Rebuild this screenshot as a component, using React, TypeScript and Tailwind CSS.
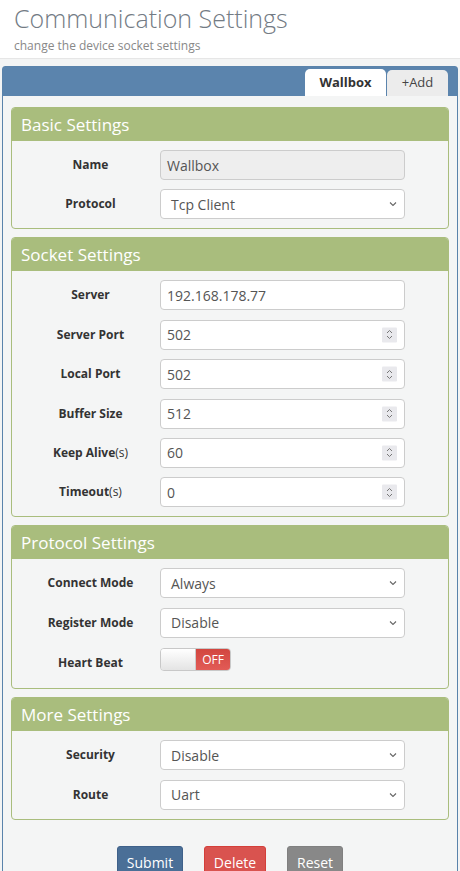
import React from "react";

type Row = {
  label: string;
  unit?: string;
  kind: "text" | "disabled" | "select" | "number" | "toggle";
  value?: string;
};

type Section = { title: string; rows: Row[] };

const sections: Section[] = [
  {
    title: "Basic Settings",
    rows: [
      { label: "Name", kind: "disabled", value: "Wallbox" },
      { label: "Protocol", kind: "select", value: "Tcp Client" },
    ],
  },
  {
    title: "Socket Settings",
    rows: [
      { label: "Server", kind: "text", value: "192.168.178.77" },
      { label: "Server Port", kind: "number", value: "502" },
      { label: "Local Port", kind: "number", value: "502" },
      { label: "Buffer Size", kind: "number", value: "512" },
      { label: "Keep Alive", unit: "(s)", kind: "number", value: "60" },
      { label: "Timeout", unit: "(s)", kind: "number", value: "0" },
    ],
  },
  {
    title: "Protocol Settings",
    rows: [
      { label: "Connect Mode", kind: "select", value: "Always" },
      { label: "Register Mode", kind: "select", value: "Disable" },
      { label: "Heart Beat", kind: "toggle" },
    ],
  },
  {
    title: "More Settings",
    rows: [
      { label: "Security", kind: "select", value: "Disable" },
      { label: "Route", kind: "select", value: "Uart" },
    ],
  },
];

const Chevron = () => (
  <svg width="8" height="5" viewBox="0 0 8 5" className="absolute right-[7px] top-1/2 -translate-y-1/2">
    <path d="M1 1l3 3 3-3" fill="none" stroke="#666" strokeWidth="1.1" />
  </svg>
);

const Spinner = () => (
  <span className="absolute right-[7px] top-1/2 -translate-y-1/2 w-[15px] h-[15px] bg-[#e9e9ed] flex flex-col items-center justify-center gap-[2px] rounded-[1px]">
    <svg width="7" height="4" viewBox="0 0 7 4">
      <path d="M1 3.5L3.5 1 6 3.5" fill="none" stroke="#777" strokeWidth="1" />
    </svg>
    <svg width="7" height="4" viewBox="0 0 7 4">
      <path d="M1 0.5L3.5 3 6 0.5" fill="none" stroke="#777" strokeWidth="1" />
    </svg>
  </span>
);

const Field: React.FC<{ row: Row }> = ({ row }) => {
  if (row.kind === "toggle") {
    return (
      <div className="self-start mt-[1px] flex h-[23px] w-[71px] rounded-[4px] border border-[#c8c8c8] overflow-hidden">
        <div className="w-[35px] bg-gradient-to-b from-white to-[#e4e4e4] border-r border-[#ccc]" />
        <div className="flex-1 bg-gradient-to-b from-[#d2463f] to-[#e25b56] text-white text-[12px] flex items-center justify-center">
          OFF
        </div>
      </div>
    );
  }
  const bg = row.kind === "disabled" ? "bg-[#eeeeee]" : "bg-white";
  return (
    <div
      className={`relative h-[30px] w-[245px] rounded-[4px] border border-[#cccccc] ${bg} flex items-center text-[14px] text-[#555] ${
        row.kind === "select" ? "pl-[10px]" : "pl-[6px]"
      }`}
    >
      {row.value}
      {row.kind === "select" && <Chevron />}
      {row.kind === "number" && <Spinner />}
    </div>
  );
};

const SettingsCard: React.FC<{ section: Section }> = ({ section }) => (
  <div className="border border-[#a9bd7d] rounded-[4px] overflow-hidden">
    <div className="bg-[#a9bd7d] h-[33px] px-[9px] flex items-center text-white text-[17px]">
      {section.title}
    </div>
    <div className="py-[9px] flex flex-col gap-[9.4px]">
      {section.rows.map((row) => (
        <div
          key={row.label}
          className={`flex items-center ${row.kind === "toggle" ? "h-[32px]" : "h-[30px]"}`}
        >
          <div className="w-[148px] pl-[9px] text-center text-[12px] text-[#333]">
            <span className="font-bold">{row.label}</span>
            {row.unit && <span>{row.unit}</span>}
          </div>
          <Field row={row} />
        </div>
      ))}
    </div>
  </div>
);

export default function App() {
  return (
    <div className="min-h-screen bg-[#f3f4f4] font-['Open_Sans','Liberation_Sans',sans-serif]">
      <div className="bg-white h-[59px] px-[14px] border-b border-[#e6e6e6]">
        <h1 className="text-[25px] font-light leading-[36px] text-[#737b84]">Communication Settings</h1>
        <p className="text-[12px] leading-[16px] text-[#888] mt-[2px]">change the device socket settings</p>
      </div>
      <div className="px-[2px] pt-[7px]">
        <div className="border border-[#5a83ab] rounded-t-[3px] bg-[#f4f5f5]">
          <div className="bg-[#5b84ad] h-[29px] flex justify-end items-end pr-[9px] gap-[1px]">
            <div className="w-[81px] h-[27px] bg-white rounded-t-[5px] flex items-center justify-center text-[13px] font-bold text-[#333]">
              Wallbox
            </div>
            <div className="w-[61px] h-[26px] bg-[#ececec] rounded-t-[5px] flex items-center justify-center text-[13px] text-[#444]">
              +Add
            </div>
          </div>
          <div className="px-[8px] pt-[11px] pb-[20px] flex flex-col gap-[8px]">
            {sections.map((s) => (
              <SettingsCard key={s.title} section={s} />
            ))}
            <div className="flex justify-center gap-[21px] mt-[18px]">
              <button className="w-[66px] h-[34px] rounded-[3px] bg-[#4a6f97] border border-[#3f618a] text-white text-[14px]">
                Submit
              </button>
              <button className="w-[62px] h-[34px] rounded-[3px] bg-[#d9534f] border border-[#d43f3a] text-white text-[14px]">
                Delete
              </button>
              <button className="w-[56px] h-[34px] rounded-[3px] bg-[#888888] border border-[#808080] text-white text-[14px]">
                Reset
              </button>
            </div>
          </div>
        </div>
      </div>
    </div>
  );
}
